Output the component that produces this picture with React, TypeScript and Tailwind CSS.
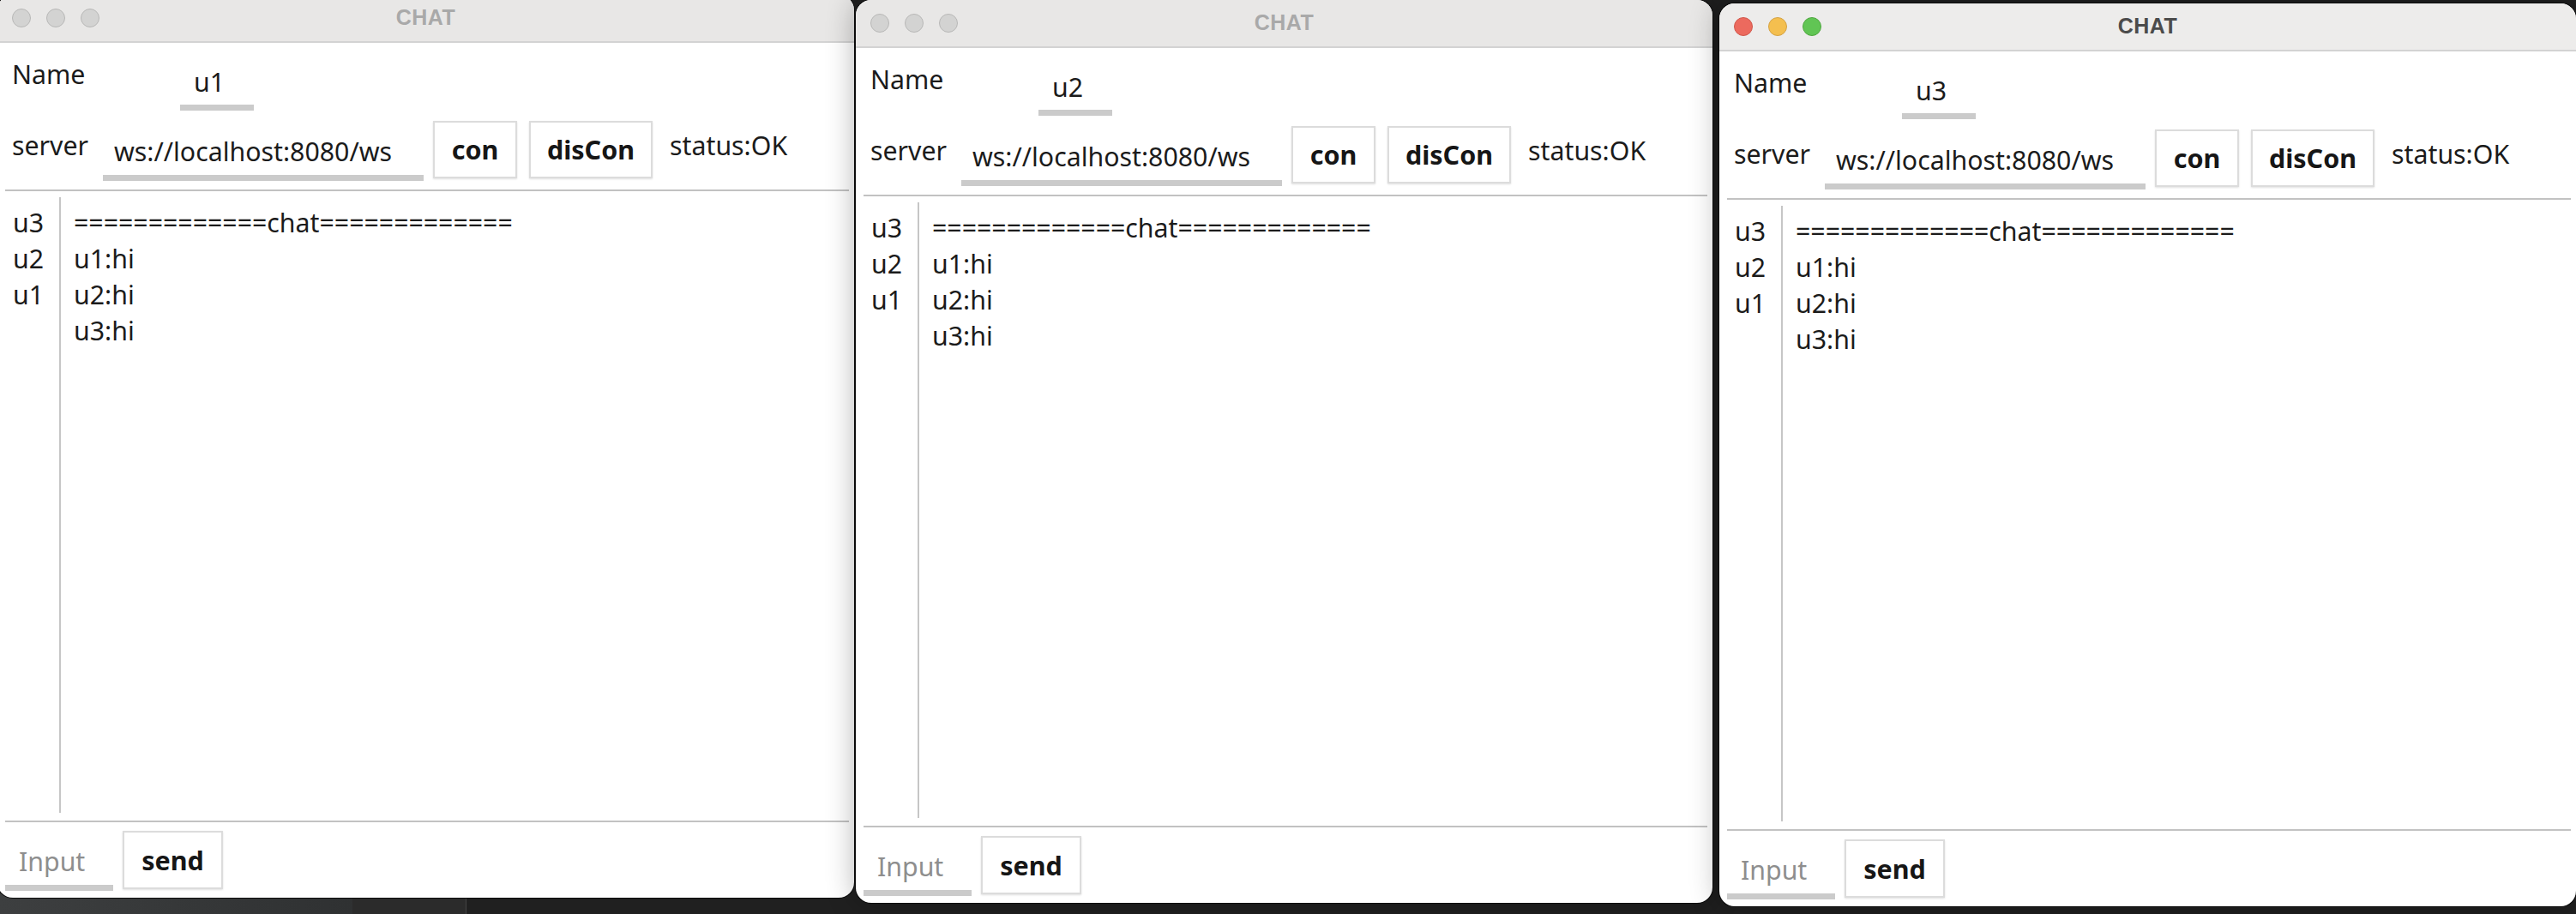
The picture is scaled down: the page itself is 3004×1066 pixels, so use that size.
import clsx from "clsx";

interface chatWindow {
  name: string;
  active: boolean;
  pos: string;
}

const windows: chatWindow[] = [
  { name: "u1", active: false, pos: "left-[-3px] top-[-6px]" },
  { name: "u2", active: false, pos: "left-[998px] top-0 shadow-[0_0_34px_rgba(0,0,0,0.32)]" },
  { name: "u3", active: true, pos: "left-[2005px] top-[4px] shadow-[0_0_34px_rgba(0,0,0,0.32)]" },
];

const users = ["u3", "u2", "u1"];
const lines = ["=============chat=============", "u1:hi", "u2:hi", "u3:hi"];

const Lights = ({ active }: { active: boolean }) => {
  const base = "size-[22px] rounded-full border";
  if (!active) {
    return (
      <div className="flex gap-[18px] pl-[17px]">
        <span className={clsx(base, "bg-[#d3d3d2] border-[#b8b8b7]")} />
        <span className={clsx(base, "bg-[#d3d3d2] border-[#b8b8b7]")} />
        <span className={clsx(base, "bg-[#d3d3d2] border-[#b8b8b7]")} />
      </div>
    );
  }
  return (
    <div className="flex gap-[18px] pl-[17px]">
      <span className={clsx(base, "bg-[#ec6a5e] border-[#d0574b]")} />
      <span className={clsx(base, "bg-[#f4bf4f] border-[#d5a243]")} />
      <span className={clsx(base, "bg-[#61c554] border-[#4fa73f]")} />
    </div>
  );
};

const Btn = ({ label, width, height }: { label: string; width: string; height: string }) => (
  <button
    className={clsx(
      "shrink-0 bg-white border-2 border-[#dcdcdc] shadow-[0_1px_2px_rgba(0,0,0,0.12)] font-bold text-[30.5px] leading-none text-[#161616] flex items-center justify-center",
      width,
      height
    )}
  >
    {label}
  </button>
);

const ChatWindow = ({ win }: { win: chatWindow }) => {
  return (
    <div
      className={clsx(
        "absolute w-[999px] h-[1053px] flex flex-col rounded-[18px] overflow-hidden bg-white ring-1 ring-[#0b0b0b] text-[30.3px] text-[#1b1b1b]",
        win.pos
      )}
    >
      {/* title bar */}
      <div
        className={clsx(
          "h-[56px] shrink-0 grid grid-cols-[1fr_auto_1fr] items-center border-b-2 border-[#d3d3d3]",
          win.active ? "bg-[#edeceb]" : "bg-[#e8e7e6]"
        )}
      >
        <Lights active={win.active} />
        <div
          className={clsx(
            "font-['Liberation_Sans',sans-serif] font-bold text-[25px] tracking-[0.5px]",
            win.active ? "text-[#4b4b4b]" : "text-[#a9a9a9]"
          )}
        >
          CHAT
        </div>
        <div />
      </div>

      {/* name row */}
      <div className="flex items-start mt-[17px]">
        <span className="w-[213px] pl-[17px] leading-[40px] shrink-0">Name</span>
        <div className="mt-[9px] w-[86px] shrink-0">
          <input
            readOnly
            value={win.name}
            className="block w-full h-[40px] bg-transparent outline-none pl-[16px] leading-[40px] text-[#1b1b1b]"
          />
          <div className="mt-[6px] h-[7px] bg-[#cbcbcb]" />
        </div>
      </div>

      {/* server row */}
      <div className="flex items-start mt-[12px]">
        <span className="w-[123px] pl-[17px] mt-[9px] leading-[40px] shrink-0">server</span>
        <div className="mt-[16px] w-[374px] shrink-0">
          <input
            readOnly
            value="ws://localhost:8080/ws"
            className="block w-full h-[40px] bg-transparent outline-none pl-[13px] leading-[40px] text-[#1b1b1b]"
          />
          <div className="mt-[7px] h-[7px] bg-[#cbcbcb]" />
        </div>
        <div className="ml-[11px]">
          <Btn label="con" width="w-[98px]" height="h-[67px]" />
        </div>
        <div className="ml-[14px]">
          <Btn label="disCon" width="w-[144px]" height="h-[67px]" />
        </div>
        <span className="ml-[20px] mt-[9px] leading-[40px]">status:OK</span>
      </div>

      <div className="mt-[10px] h-[2px] ml-[9px] mr-[6px] bg-[#c2c2c2] shrink-0" />

      {/* chat area */}
      <div className="flex-1 flex pl-[18px] pt-[7px] pb-[9px] min-h-0">
        <div className="w-[54px] pt-[9px] leading-[42px] shrink-0">
          {users.map((u) => (
            <div key={u}>{u}</div>
          ))}
        </div>
        <div className="border-l-2 border-[#c6c6c6] pl-[15px] pt-[9px] leading-[42px] flex-1">
          {lines.map((l, i) => (
            <div key={i}>{l}</div>
          ))}
        </div>
      </div>

      <div className="h-[2px] ml-[9px] mr-[6px] bg-[#c2c2c2] shrink-0" />

      {/* input row */}
      <div className="flex items-start mt-[10px] pl-[9px] pb-[8px] shrink-0">
        <div className="mt-[16px] w-[126px] shrink-0">
          <input
            placeholder="Input"
            className="block w-full h-[40px] bg-transparent outline-none pl-[16px] leading-[40px] placeholder:text-[#8e8e8e]"
          />
          <div className="mt-[7px] h-[7px] bg-[#cbcbcb]" />
        </div>
        <div className="ml-[11px]">
          <Btn label="send" width="w-[117px]" height="h-[68px]" />
        </div>
      </div>
    </div>
  );
};

export default function App() {
  return (
    <div className="relative w-[3004px] h-[1066px] overflow-hidden bg-[#202020] font-['Noto_Sans',sans-serif]">
      <div className="absolute left-0 bottom-0 h-[24px] w-[411px] bg-gradient-to-r from-[#3d3f40] to-[#2f3132]" />
      <div className="absolute left-[411px] bottom-0 h-[24px] w-[133px] bg-[#2b2b2b] border-r border-[#444]" />
      {windows.map((w) => (
        <ChatWindow key={w.name} win={w} />
      ))}
    </div>
  );
}
